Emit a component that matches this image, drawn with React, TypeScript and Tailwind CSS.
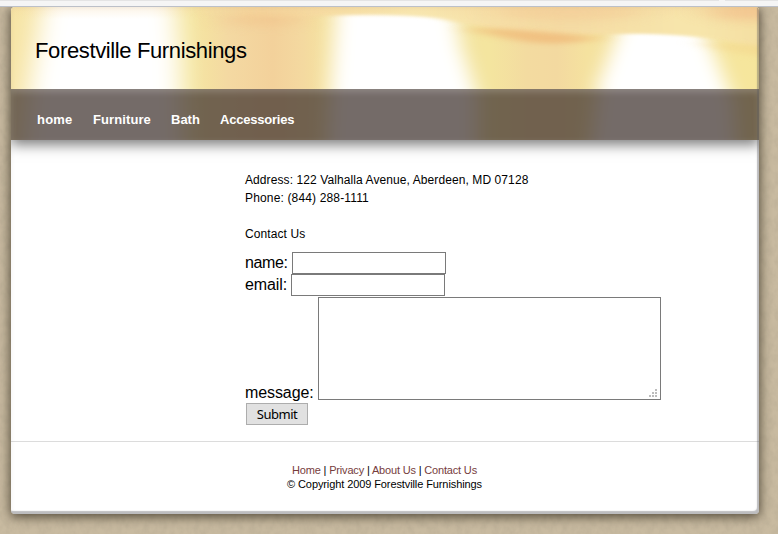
import React from "react";

function BannerArt() {
  return (
    <svg
      className="absolute inset-0 h-full w-full"
      viewBox="0 0 748 133"
      preserveAspectRatio="none"
      colorInterpolationFilters="sRGB"
      aria-hidden="true"
    >
      <defs>
        <linearGradient id="curtain" gradientUnits="userSpaceOnUse" x1="0" y1="0" x2="748" y2="0">
          <stop offset="0" stopColor="#f7e5a6" />
          <stop offset="0.24" stopColor="#f5e6a0" />
          <stop offset="0.29" stopColor="#f4d9a2" />
          <stop offset="0.35" stopColor="#f3d19b" />
          <stop offset="0.39" stopColor="#f4d9a0" />
          <stop offset="0.42" stopColor="#f5e29f" />
          <stop offset="0.64" stopColor="#f4e59f" />
          <stop offset="0.69" stopColor="#f3dba0" />
          <stop offset="0.73" stopColor="#f3d9a0" />
          <stop offset="0.77" stopColor="#f5e29f" />
          <stop offset="0.9" stopColor="#f6e6a0" />
          <stop offset="1" stopColor="#f6e69c" />
        </linearGradient>
        <linearGradient id="valance" gradientUnits="userSpaceOnUse" x1="180" y1="0" x2="748" y2="0">
          <stop offset="0" stopColor="#f5e3a6" stopOpacity="0" />
          <stop offset="0.12" stopColor="#f4d39b" />
          <stop offset="0.24" stopColor="#f6dda3" />
          <stop offset="0.4" stopColor="#f8e9b2" />
          <stop offset="0.53" stopColor="#f6dfa6" />
          <stop offset="0.65" stopColor="#f5dba3" />
          <stop offset="0.78" stopColor="#f6e1a8" />
          <stop offset="0.88" stopColor="#f7e6ac" />
          <stop offset="1" stopColor="#f5dfa2" />
        </linearGradient>
        <linearGradient id="warmTop" x1="0" y1="0" x2="0" y2="1">
          <stop offset="0" stopColor="#f4d09c" stopOpacity="0.7" />
          <stop offset="1" stopColor="#f4d69a" stopOpacity="0" />
        </linearGradient>
        <filter id="softWide" x="-50%" y="-50%" width="200%" height="200%">
          <feGaussianBlur stdDeviation="13 4" />
        </filter>
        <filter id="softSide" x="-50%" y="-50%" width="200%" height="200%">
          <feGaussianBlur stdDeviation="10 3" />
        </filter>
        <filter id="softEdge" x="-20%" y="-100%" width="140%" height="300%">
          <feGaussianBlur stdDeviation="8 1.5" />
        </filter>
        <filter id="softStreak" x="-30%" y="-100%" width="160%" height="300%">
          <feGaussianBlur stdDeviation="12 2.5" />
        </filter>
        <filter id="softGlow" x="-50%" y="-150%" width="200%" height="400%">
          <feGaussianBlur stdDeviation="16 5" />
        </filter>
      </defs>
      <rect width="748" height="133" fill="url(#curtain)" />
      <path d="M36-30H161L169 50L174 165H8L18 80Z" fill="#fff" filter="url(#softWide)" />
      <path d="M326-10H440L450 40L466 90V165H314L320 70Z" fill="#fff" filter="url(#softSide)" />
      <path d="M609 20H692L708 60L722 95L728 165H576L588 75Z" fill="#fff" filter="url(#softSide)" />
      <path
        d="M180-20H770V44Q735 38 695 31Q650 26 607 27Q560 28 500 24Q465 19 425 11Q370 5 290 10Q230 12 180 6Z"
        fill="url(#valance)"
        filter="url(#softEdge)"
      />
      <rect width="748" height="12" fill="url(#warmTop)" opacity=".35" />
      <ellipse cx="251" cy="13" rx="42" ry="6" fill="#f1c188" opacity=".5" filter="url(#softGlow)" />
      <ellipse cx="560" cy="5" rx="75" ry="8" fill="#f3c794" opacity=".5" filter="url(#softGlow)" />
      <ellipse cx="738" cy="5" rx="42" ry="9" fill="#f2c08c" opacity=".75" filter="url(#softGlow)" />
      <path d="M455 21Q510 21 590 31Q550 40 515 35Q485 30 455 21Z" fill="#f0b978" opacity=".75" filter="url(#softStreak)" />
      <path d="M685 34Q720 38 770 38V51Q720 48 685 34Z" fill="#f3d48c" opacity=".5" filter="url(#softStreak)" />
    </svg>
  );
}

function PaperGrain() {
  return (
    <svg className="absolute inset-0 h-full w-full" aria-hidden="true">
      <filter id="grain" x="0" y="0" width="100%" height="100%">
        <feTurbulence type="fractalNoise" baseFrequency="0.16 0.11" numOctaves="4" seed="7" />
        <feColorMatrix values="0 0 0 0 .42  0 0 0 0 .36  0 0 0 0 .26  .6 0 0 0 -.21" />
      </filter>
      <rect width="100%" height="100%" filter="url(#grain)" />
    </svg>
  );
}

const links = ["home", "Furniture", "Bath", "Accessories"];
const footerLinks = ["Home", "Privacy", "About Us", "Contact Us"];

export default function App() {
  return (
    <div className="relative h-[534px] w-[778px] overflow-hidden bg-[#c8baa0] font-['Liberation_Sans',Arial,sans-serif] text-black">
      <PaperGrain />
      <div className="relative flex h-full flex-col">
        <div className="relative z-10 flex h-[7px] shrink-0 items-start border-b border-[#bcc0c8] bg-[#f5f5f5]">
          <div className="h-px w-[719px] bg-[#e4e4e4]" />
          <div className="ml-1.5 h-px flex-1 bg-[#e4e4e4]" />
        </div>

        <div className="relative ml-[11px] h-[507px] w-[748px] shrink-0 rounded-[4px] shadow-[0_2px_11px_1px_rgba(45,38,25,0.75)]">
          <div className="flex h-full flex-col overflow-hidden rounded-[4px] bg-white">
            <header className="relative h-[133px] shrink-0 shadow-[0_5px_12px_rgba(0,0,0,0.5)]">
              <BannerArt />
              <div className="relative flex h-[82px] items-center pt-[5px] pl-6">
                <h1 className="text-[22px] leading-[26px] tracking-[-0.37px] whitespace-nowrap">Forestville Furnishings</h1>
              </div>
              <nav className="relative flex h-[51px] gap-5 bg-[#403430]/73 pt-[23px] pl-[26px] text-[13px] leading-4 font-bold text-white shadow-[inset_0_3px_7px_rgba(255,255,255,0.2)]">
                <a href="#" className="w-9 tracking-[0.2px]">{links[0]}</a>
                <a href="#" className="w-[58px] tracking-[0.1px]">{links[1]}</a>
                <a href="#" className="w-[29px]">{links[2]}</a>
                <a href="#" className="tracking-[-0.22px]">{links[3]}</a>
              </nav>
            </header>

            <main className="h-[302px] shrink-0 border-b border-[#dcdcdc] pt-[31px] pl-[234px]">
              <div className="text-[12px] leading-[18px] tracking-[0.09px]">
                <p>Address: 122 Valhalla Avenue, Aberdeen, MD 07128</p>
                <p className="tracking-[0.15px]">Phone: (844) 288-1111</p>
                <p className="mt-[18px]">Contact Us</p>
              </div>
              <form className="mt-[9px] text-[16px] leading-[22px]">
                <label className="flex h-[22px]">
                  <span className="w-[47px] tracking-[-0.35px]">name:</span>
                  <input className="h-[22px] w-[154px] border border-[#7a7a7a] bg-white" />
                </label>
                <label className="flex h-[22px]">
                  <span className="w-[46px] tracking-[-0.1px]">email:</span>
                  <input className="h-[22px] w-[154px] border border-[#7a7a7a] bg-white" />
                </label>
                <label className="mt-px flex items-end">
                  <span className="-mb-1 w-[73px] tracking-[-0.1px]">message:</span>
                  <span className="flex h-[103px] w-[343px] items-end justify-end border border-[#7a7a7a] bg-white px-0.5 py-px">
                    <svg width="9" height="9" viewBox="0 0 9 9" fill="#bdbdbd" shapeRendering="crispEdges">
                      <path d="M6 0h2v2H6zM3 3h2v2H3zM6 3h2v2H6zM0 6h2v2H0zM3 6h2v2H3zM6 6h2v2H6z" />
                    </svg>
                  </span>
                </label>
                <button
                  type="button"
                  className="mt-[3px] ml-px block h-[22px] w-[62px] border border-[#adadad] bg-[#e1e1e1] font-['Noto_Sans',sans-serif] text-[13px] leading-5 tracking-[-0.5px]"
                >
                  Submit
                </button>
              </form>
            </main>

            <footer className="pt-[21px] pr-px text-center text-[11px] leading-[14px]">
              <p className="tracking-[-0.17px]">
                {footerLinks.map((label, i) => (
                  <React.Fragment key={label}>
                    {i > 0 && " | "}
                    <a href="#" className="text-[#763c3c]">{label}</a>
                  </React.Fragment>
                ))}
              </p>
              <p className="tracking-[-0.1px]">© Copyright 2009 Forestville Furnishings</p>
            </footer>
          </div>
          <div className="pointer-events-none absolute inset-0 rounded-[4px] shadow-[inset_-2px_-3px_1px_rgba(90,90,95,0.38),inset_0_0_5px_rgba(0,0,0,0.06)]" />
        </div>
      </div>
    </div>
  );
}
